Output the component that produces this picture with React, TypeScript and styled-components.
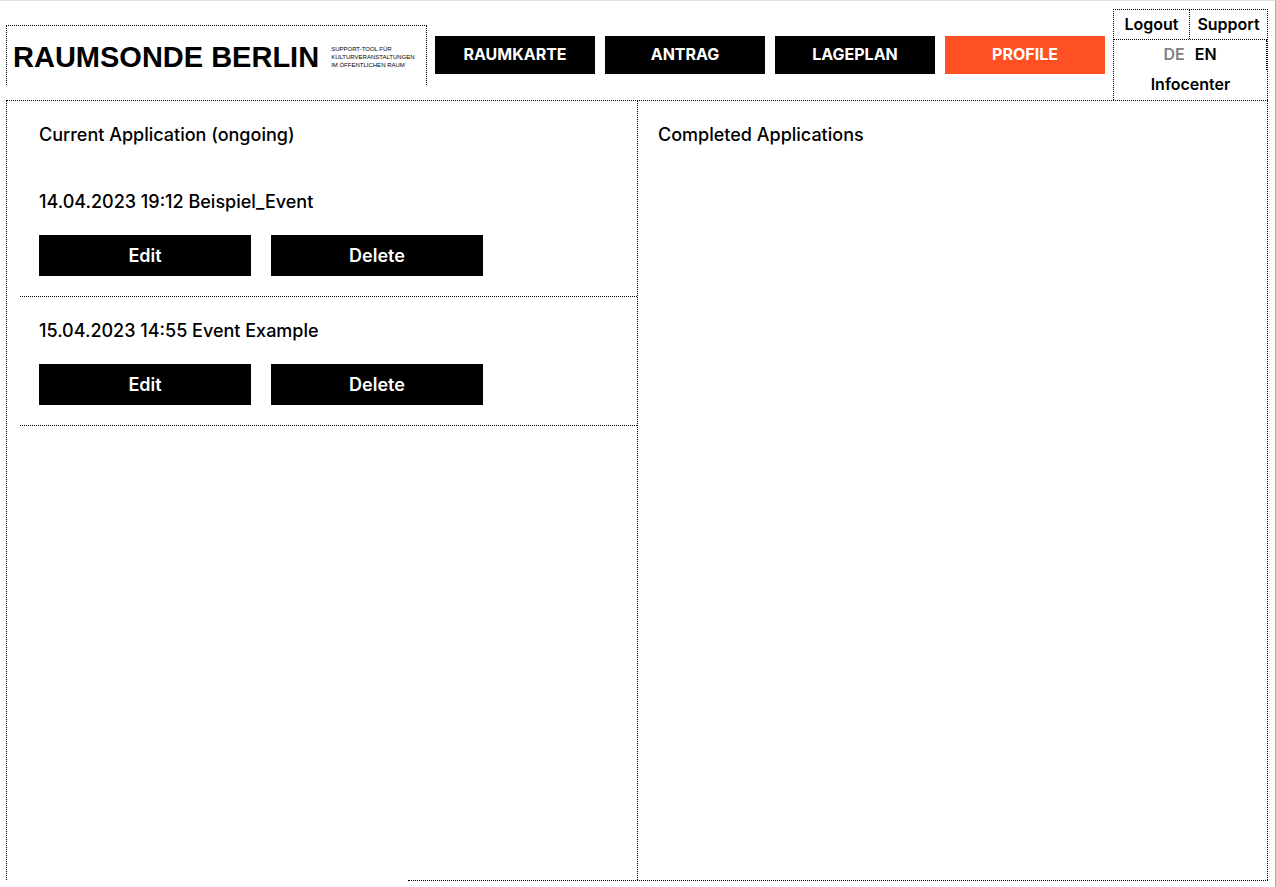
import React from "react";
import styled, { createGlobalStyle } from "styled-components";

const dotted = "1px dotted #000";

const GlobalStyle = createGlobalStyle`
  *, *::before, *::after { box-sizing: border-box; }
  body {
    margin: 0;
    background: #fff;
    color: #000;
    font-family: Inter, "Liberation Sans", sans-serif;
  }
  a { color: inherit; text-decoration: none; }
  h1, h2, h3, p, ul { margin: 0; padding: 0; }
`;

const Shell = styled.div`
  display: flex;
  flex-direction: column;
  min-height: 100vh;
  padding: 0 7px 6px 6px;
  border-top: 1px solid #dfdfdf;
  border-right: 1px solid #a9a9a9;
`;

const Header = styled.header`
  display: flex;
  gap: 8px;
  padding-top: 8px;
`;

const Brand = styled.a`
  display: flex;
  flex: none;
  align-items: center;
  gap: 12px;
  height: 60px;
  margin-top: 16px;
  padding: 2px 6px 0;
  width: 421px;
  border: ${dotted};
  border-bottom: 0;
  white-space: nowrap;
`;

const BrandName = styled.span`
  font: bold 29px/36px "Liberation Sans", Arial, sans-serif;
`;

const BrandClaim = styled.span`
  font: 6px/8px "Liberation Sans", Arial, sans-serif;
`;

const Nav = styled.nav`
  display: flex;
  flex: 1;
  gap: 10px;
  height: 38px;
  margin-top: 27px;
`;

const NavLink = styled.a<{ $active?: boolean }>`
  flex: 1;
  background: ${(p) => (p.$active ? "#ff5024" : "#000")};
  color: #fff;
  font-size: 16px;
  font-weight: 700;
  line-height: 36px;
  text-align: center;
`;

const Utility = styled.div`
  flex: none;
  width: 155px;
  border: ${dotted};
  border-bottom: 0;
  font-size: 16px;
  font-weight: 600;
  line-height: 29px;
  text-align: center;
`;

const AccountRow = styled.div`
  display: grid;
  grid-template-columns: 75px 1fr;
  border-bottom: ${dotted};
`;

const AccountLink = styled.a`
  & + & { border-left: ${dotted}; }
`;

const LanguageRow = styled.div`
  display: flex;
  justify-content: center;
  gap: 10px;
  height: 30px;
  border-right: ${dotted};
`;

const Language = styled.a<{ $muted?: boolean }>`
  color: ${(p) => (p.$muted ? "#808080" : "#000")};
`;

const InfoLink = styled.a`
  display: block;
  height: 30px;
`;

const Main = styled.main`
  display: grid;
  grid-template-columns: 1fr 1fr;
  flex: 1;
  border: ${dotted};
  border-bottom: 0;
`;

const BottomRule = styled.div`
  margin-left: 402px;
  border-bottom: ${dotted};
`;

const Panel = styled.section`
  padding: 20px 0 0 13px;
`;

const CompletedPanel = styled.section`
  padding: 20px;
  border-left: ${dotted};
`;

const PanelTitle = styled.h2<{ $inset?: boolean }>`
  padding-left: ${(p) => (p.$inset ? "19px" : "0")};
  font-size: 18px;
  font-weight: 500;
  line-height: 28px;
`;

const Entries = styled.ul`
  margin-top: 19px;
  list-style: none;
`;

const Entry = styled.li`
  padding: 20px 19px;
  border-bottom: ${dotted};
`;

const EntryTitle = styled.h3`
  font-size: 18px;
  font-weight: 500;
  line-height: 28px;
`;

const Actions = styled.div`
  display: flex;
  gap: 20px;
  margin-top: 19px;
`;

const ActionButton = styled.button`
  width: 212px;
  height: 41px;
  padding: 0;
  border: 0;
  background: #000;
  color: #fff;
  font: 600 18px/41px Inter, "Liberation Sans", sans-serif;
  cursor: pointer;
`;

const navItems = ["RAUMKARTE", "ANTRAG", "LAGEPLAN", "PROFILE"];
const applications = [
  "14.04.2023 19:12 Beispiel_Event",
  "15.04.2023 14:55 Event Example",
];

export default function App() {
  return (
    <>
      <GlobalStyle />
      <Shell>
        <Header>
          <Brand href="#">
            <BrandName>RAUMSONDE BERLIN</BrandName>
            <BrandClaim>
              SUPPORT-TOOL FÜR
              <br />
              KULTURVERANSTALTUNGEN
              <br />
              IM ÖFFENTLICHEN RAUM
            </BrandClaim>
          </Brand>
          <Nav>
            {navItems.map((item) => (
              <NavLink key={item} href="#" $active={item === "PROFILE"}>
                {item}
              </NavLink>
            ))}
          </Nav>
          <Utility>
            <AccountRow>
              <AccountLink href="#">Logout</AccountLink>
              <AccountLink href="#">Support</AccountLink>
            </AccountRow>
            <LanguageRow>
              <Language href="#" $muted>DE</Language>
              <Language href="#">EN</Language>
            </LanguageRow>
            <InfoLink href="#">Infocenter</InfoLink>
          </Utility>
        </Header>
        <Main>
          <Panel>
            <PanelTitle $inset>Current Application (ongoing)</PanelTitle>
            <Entries>
              {applications.map((title) => (
                <Entry key={title}>
                  <EntryTitle>{title}</EntryTitle>
                  <Actions>
                    <ActionButton type="button">Edit</ActionButton>
                    <ActionButton type="button">Delete</ActionButton>
                  </Actions>
                </Entry>
              ))}
            </Entries>
          </Panel>
          <CompletedPanel>
            <PanelTitle>Completed Applications</PanelTitle>
          </CompletedPanel>
        </Main>
        <BottomRule />
      </Shell>
    </>
  );
}
